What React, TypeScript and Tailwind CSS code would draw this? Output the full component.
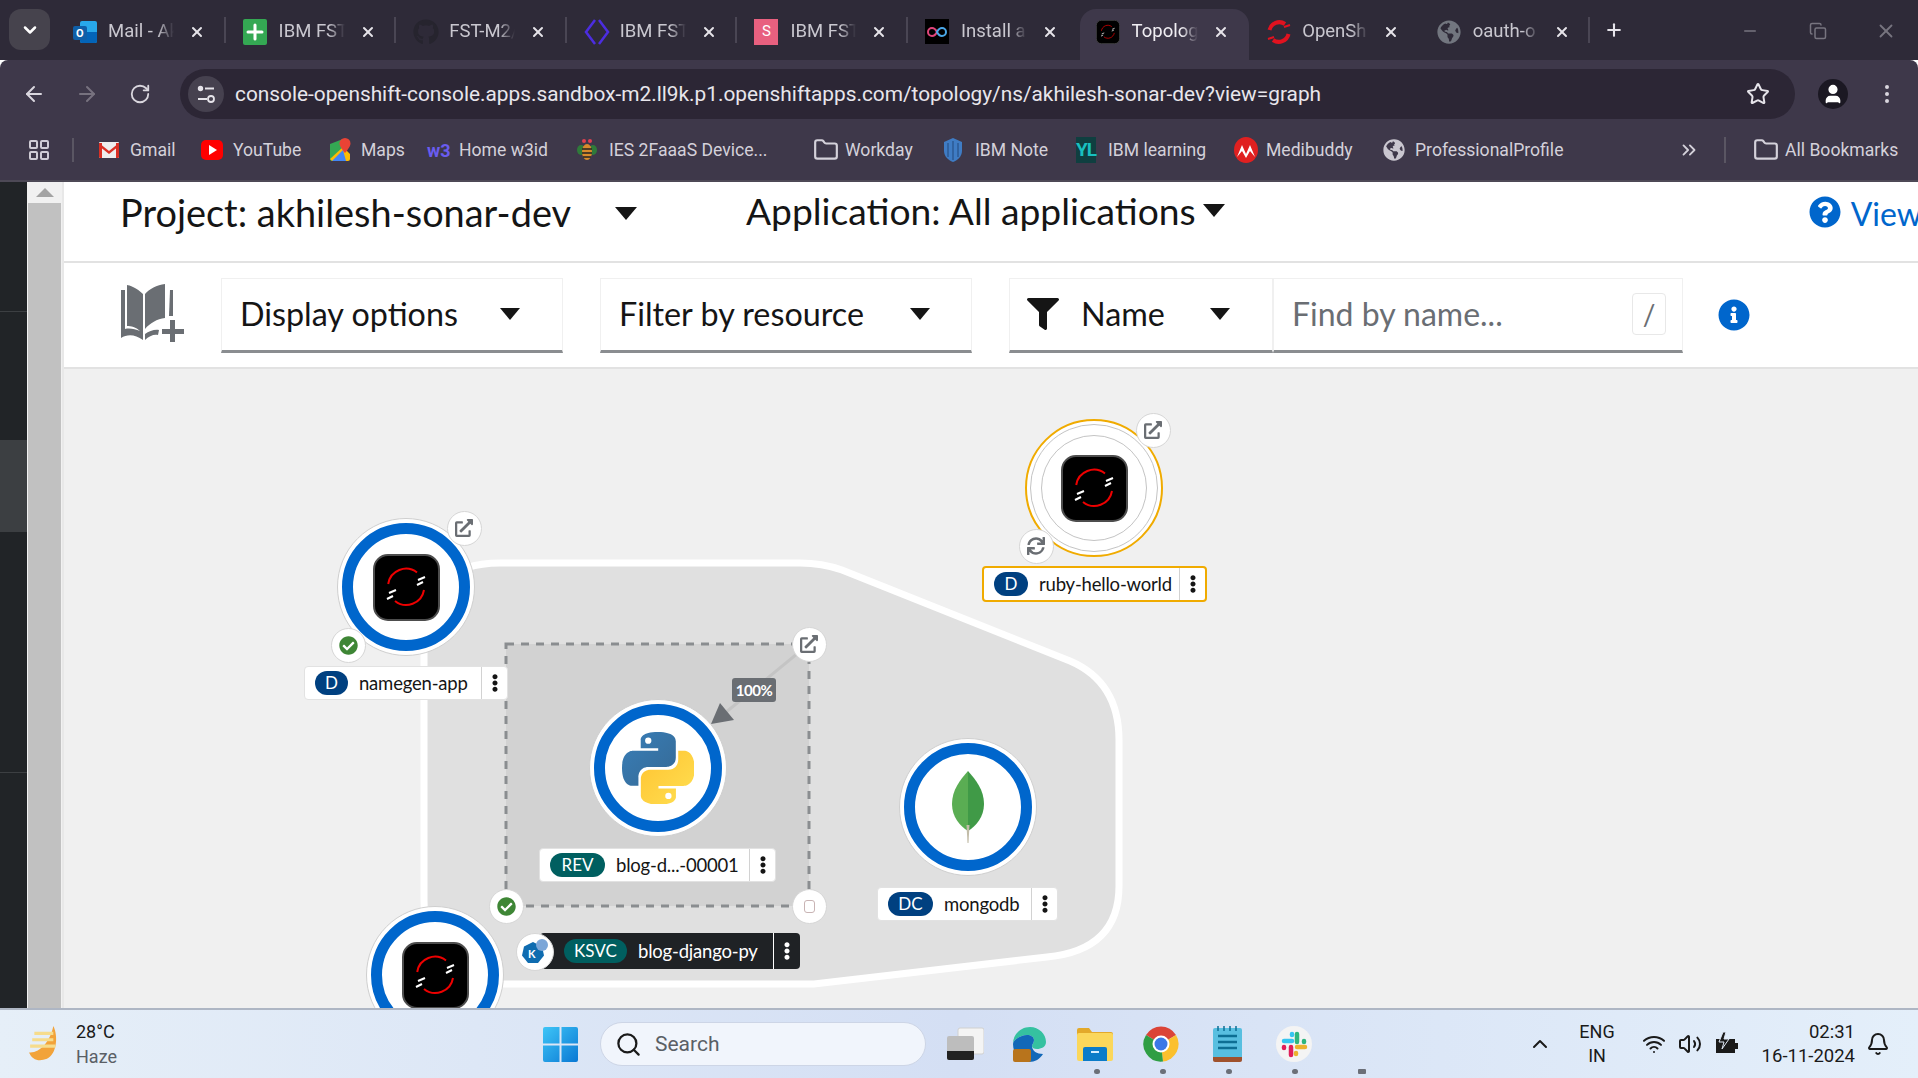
import type { ReactNode } from "react";
import {
  FaCheckCircle,
  FaEllipsisV,
  FaExternalLinkAlt,
  FaFilter,
  FaGithub,
  FaGlobeAmericas,
  FaInfoCircle,
  FaQuestionCircle,
  FaSync,
} from "react-icons/fa";
import {
  ArrowLeft,
  ArrowRight,
  Bell,
  ChevronDown,
  ChevronUp,
  ChevronsRight,
  Copy,
  EllipsisVertical,
  Folder,
  LayoutGrid,
  Minus,
  Plus,
  RotateCw,
  Search,
  Star,
  User,
  Volume2,
  Wifi,
  X,
} from "lucide-react";

// page coordinates of the canvas corner, nodes below are given in page coordinates
const OX = 64;
const OY = 369;

function ShiftIcon({ size = 67 }: { size?: number }) {
  return (
    <svg width={size} height={size} viewBox="0 0 67 67">
      <rect x="1" y="1" width="65" height="65" rx="14" fill="#000" stroke="#4d4d4d" strokeWidth="2" />
      <path d="M15.2 30A18 18 0 0 1 44 18.5" fill="none" stroke="#e00" strokeWidth="2" />
      <path d="M51 36A18 18 0 0 1 22 47" fill="none" stroke="#e00" strokeWidth="2" />
      <path d="M45 26l7-3M44 31l6-3M16 39l7-3M14 45l6-3" stroke="#fff" strokeWidth="2" />
    </svg>
  );
}

function PythonIcon() {
  return (
    <svg width="72" height="72" viewBox="0 0 110 110">
      <defs>
        <linearGradient id="pyBlue" x1="0" y1="0" x2="1" y2="1">
          <stop offset="0" stopColor="#387eb8" />
          <stop offset="1" stopColor="#366994" />
        </linearGradient>
        <linearGradient id="pyYellow" x1="0" y1="0" x2="1" y2="1">
          <stop offset="0" stopColor="#ffe052" />
          <stop offset="1" stopColor="#ffc331" />
        </linearGradient>
      </defs>
      <path
        fill="url(#pyBlue)"
        d="M54.9 0C26.9 0 28.6 12.2 28.6 12.2l0 12.6h26.7v3.8H18S0 26.5 0 54.9c0 28.4 15.7 27.4 15.7 27.4h9.4V69.1s-.5-15.7 15.5-15.7h26.6s15 .2 15-14.5V14.6S84.5 0 54.9 0zM40.1 8.5a4.8 4.8 0 1 1 0 9.6 4.8 4.8 0 0 1 0-9.6z"
      />
      <path
        fill="url(#pyYellow)"
        transform="rotate(180 55.5 55.5)"
        d="M54.9 0C26.9 0 28.6 12.2 28.6 12.2l0 12.6h26.7v3.8H18S0 26.5 0 54.9c0 28.4 15.7 27.4 15.7 27.4h9.4V69.1s-.5-15.7 15.5-15.7h26.6s15 .2 15-14.5V14.6S84.5 0 54.9 0zM40.1 8.5a4.8 4.8 0 1 1 0 9.6 4.8 4.8 0 0 1 0-9.6z"
      />
    </svg>
  );
}

function MongoIcon() {
  return (
    <svg width="34" height="72" viewBox="0 0 34 72">
      <path d="M17 0C9 9 1 19 1 33c0 13 8 22 16 27z" fill="#5aad53" />
      <path d="M17 0c8 9 16 19 16 33 0 13-8 22-16 27z" fill="#409a47" />
      <path d="M15.5 54h3l-1 18h-1z" fill="#c2bca8" />
    </svg>
  );
}

function Node({
  x,
  y,
  warn,
  children,
}: {
  x: number;
  y: number;
  warn?: boolean;
  children: ReactNode;
}) {
  const size = 138;
  return (
    <div
      className={
        warn
          ? "absolute flex items-center justify-center rounded-full border-2 border-[#f0ab00] bg-white"
          : "absolute flex items-center justify-center rounded-full border border-[#cfcfcf] bg-white"
      }
      style={{ left: x - OX - size / 2, top: y - OY - size / 2, width: size, height: size }}
    >
      <div
        className={
          warn
            ? "flex h-[128px] w-[128px] items-center justify-center rounded-full border border-[#c4c4c4]"
            : "flex h-[128px] w-[128px] items-center justify-center rounded-full border-[11px] border-[#0066cc]"
        }
      >
        {warn ? (
          <div className="flex h-[106px] w-[106px] items-center justify-center rounded-full border border-[#c4c4c4]">
            {children}
          </div>
        ) : (
          children
        )}
      </div>
    </div>
  );
}

function Deco({ x, y, size = 35, children }: { x: number; y: number; size?: number; children: ReactNode }) {
  return (
    <div
      className="absolute flex items-center justify-center rounded-full border border-[#d6d6d6] bg-white text-[#6a6e73]"
      style={{ left: x - OX - size / 2, top: y - OY - size / 2, width: size, height: size }}
    >
      {children}
    </div>
  );
}

function NodeLabel({
  x,
  y,
  w,
  h = 34,
  badge,
  badgeW,
  name,
  variant,
}: {
  x: number;
  y: number;
  w: number;
  h?: number;
  badge: string;
  badgeW: number;
  name: string;
  variant?: "dark" | "warn";
}) {
  const dark = variant === "dark";
  const teal = badge === "REV" || badge === "KSVC";
  return (
    <div
      className={
        dark
          ? "absolute flex items-center rounded bg-[#1f2225] pl-[24px] text-white"
          : variant === "warn"
            ? "absolute flex items-center rounded border-2 border-[#f0ab00] bg-white pl-[10px] text-[#151515]"
            : "absolute flex items-center rounded border border-[#e2e2e2] bg-white pl-[10px] text-[#151515]"
      }
      style={{ left: x - OX, top: y - OY, width: w, height: h }}
    >
      <span
        className={
          teal
            ? "flex h-[24px] shrink-0 items-center justify-center rounded-full bg-[#005f60] text-[17px] text-white"
            : "flex h-[24px] shrink-0 items-center justify-center rounded-full bg-[#004080] text-[17px] text-white"
        }
        style={{ width: badgeW }}
      >
        {badge}
      </span>
      <span className="ml-[11px] flex-1 translate-y-[1px] whitespace-nowrap text-[18.5px] tracking-[-0.2px]">{name}</span>
      <span className={dark ? "flex h-full w-[27px] shrink-0 items-center justify-center border-l border-white" : "flex h-full w-[26px] shrink-0 items-center justify-center border-l border-[#d2d2d2]"}>
        <FaEllipsisV className={dark ? "text-[18px] text-white" : "text-[18px] text-[#151515]"} />
      </span>
    </div>
  );
}

function Canvas() {
  return (
    <div className="relative min-h-0 flex-1 overflow-hidden bg-[#f0f0f0] font-['Lato',sans-serif]">
      <svg className="absolute inset-0" width="1854" height="639" viewBox="64 369 1854 639">
        <path
          d="M424 640Q424 563 500 563L800 563Q822 563 842 570L1070 661Q1119 682 1119 740L1119 886Q1119 950 1047 957L814 984L500 984Q424 984 424 900Z"
          fill="#e0e0e0"
          stroke="#fff"
          strokeWidth="7"
        />
        <rect x="506" y="644" width="303" height="262" fill="#d2d2d2" stroke="#8a8d90" strokeWidth="3" strokeDasharray="8 7" />
        <path d="M809 644L725 713" stroke="#c4c4c4" strokeWidth="3" />
        <path d="M711 724L720 703L734 720Z" fill="#6a6e73" />
      </svg>

      <Node x={406} y={587}>
        <ShiftIcon />
      </Node>
      <Deco x={464} y={528}>
        <FaExternalLinkAlt className="text-[18px]" />
      </Deco>
      <Deco x={348} y={645}>
        <FaCheckCircle className="text-[19px] text-[#3e8635]" />
      </Deco>
      <NodeLabel x={304} y={666} w={204} badge="D" badgeW={33} name="namegen-app" />

      <Node x={658} y={768}>
        <PythonIcon />
      </Node>
      <Deco x={809} y={644}>
        <FaExternalLinkAlt className="text-[18px]" />
      </Deco>
      <Deco x={506} y={906}>
        <FaCheckCircle className="text-[19px] text-[#3e8635]" />
      </Deco>
      <Deco x={809} y={906}>
        <span className="h-[13px] w-[11px] rounded-[3px] border border-[#c9b4b4]" />
      </Deco>
      <div className="absolute left-[668px] top-[309px] flex h-[24px] w-[44px] items-center justify-center rounded-[3px] bg-[#6a6e73] text-[15px] font-bold tracking-[-0.5px] text-white">
        100%
      </div>
      <NodeLabel x={539} y={848} w={237} badge="REV" badgeW={55} name="blog-d...-00001" />

      <NodeLabel x={540} y={933} w={260} h={36} badge="KSVC" badgeW={63} name="blog-django-py" variant="dark" />
      <Deco x={535} y={952} size={38}>
        <svg width="30" height="30" viewBox="0 0 30 30">
          <path d="M13 5l9 4.5 2 9-6 7.5h-10l-6-7.5 2-9z" fill="#0f6cb0" />
          <circle cx="22" cy="8" r="6" fill="#7ba6d8" />
          <text x="8" y="21" fontSize="11" fontWeight="700" fill="#fff" fontFamily="Lato, sans-serif">
            K
          </text>
        </svg>
      </Deco>

      <Node x={435} y={975}>
        <ShiftIcon />
      </Node>

      <Node x={968} y={807}>
        <MongoIcon />
      </Node>
      <NodeLabel x={877} y={887} w={181} badge="DC" badgeW={45} name="mongodb" />

      <Node x={1094} y={488} warn>
        <ShiftIcon />
      </Node>
      <Deco x={1153} y={430}>
        <FaExternalLinkAlt className="text-[18px]" />
      </Deco>
      <Deco x={1036} y={546}>
        <FaSync className="text-[18px]" />
      </Deco>
      <NodeLabel x={982} y={566} w={225} h={36} badge="D" badgeW={34} name="ruby-hello-world" variant="warn" />
    </div>
  );
}

function BookPlus() {
  return (
    <svg className="-translate-y-[3px]" width="66" height="60" viewBox="0 0 66 60">
      <path
        d="M3 8v48c6-4 14-4 22 2V12C19 6 11 3 9 3v41c4 0 9 1 13 5-5-2-10-3-15-2V8z"
        fill="#6a6e73"
      />
      <path d="M27 12c4-5 12-9 20-10v34c-8 1-15 5-20 11z" fill="#6a6e73" />
      <path d="M52 8h3v26h-4z" fill="#6a6e73" />
      <path d="M27 52c4-3 10-5 14-4l-1 5c-4-1-9 1-13 5z" fill="#6a6e73" />
      <path d="M52 38h5v9h9v5h-9v8h-5v-8h-8v-5h8z" fill="#6a6e73" />
    </svg>
  );
}

function Caret({ className }: { className: string }) {
  return <span className={`h-0 w-0 shrink-0 border-x-[10.5px] border-t-[12px] border-x-transparent border-t-[#151515] ${className}`} />;
}

function Dropdown({ className, label, caret }: { className: string; label: string; caret: string }) {
  return (
    <div className={`flex h-[75px] items-center border border-b-[3px] border-[#f0f0f0] border-b-[#8a8d90] ${className}`}>
      <span className="text-[32.3px] text-[#151515]">{label}</span>
      <Caret className={caret} />
    </div>
  );
}

function Toolbar() {
  return (
    <div className="flex h-[106px] shrink-0 items-center border-b-2 border-[#e2e2e2] bg-white pl-[54px] font-['Lato',sans-serif]">
      <BookPlus />
      <Dropdown className="ml-[37px] w-[342px] pl-[18px]" label="Display options" caret="ml-[42px]" />
      <Dropdown className="ml-[37px] w-[372px] pl-[18px]" label="Filter by resource" caret="ml-[46px]" />
      <div className="ml-[37px] flex h-[75px] w-[264px] items-center border border-b-[3px] border-[#f0f0f0] border-b-[#8a8d90] pl-[17px]">
        <FaFilter className="text-[32px] text-[#151515]" />
        <span className="ml-[22px] text-[32.3px] text-[#151515]">Name</span>
        <Caret className="ml-[45px]" />
      </div>
      <div className="flex h-[75px] w-[410px] items-center border border-b-[3px] border-[#f0f0f0] border-b-[#8a8d90] pl-[18px]">
        <span className="text-[32px] text-[#6a6e73]">Find by name...</span>
        <span className="ml-auto mr-[16px] flex h-[42px] w-[34px] items-center justify-center rounded border border-[#e8e8e8] text-[28px] text-[#6a6e73]">
          /
        </span>
      </div>
      <FaInfoCircle className="ml-[35px] text-[32px] text-[#0066cc]" />
    </div>
  );
}

function ProjectBar() {
  return (
    <div className="flex h-[81px] shrink-0 items-center overflow-hidden border-b-2 border-[#e2e2e2] bg-white pb-[16px] pl-[56px] font-['Lato',sans-serif] text-[#151515]">
      <span className="w-[494px] shrink-0 whitespace-nowrap text-[37.9px]">Project: akhilesh-sonar-dev</span>
      <Caret className="ml-[1px] border-x-[11.5px] border-t-[13px]" />
      <span className="ml-[109px] shrink-0 -translate-y-[3px] whitespace-nowrap text-[37.2px]">Application: All applications</span>
      <Caret className="ml-[7px] -translate-y-[3px] border-x-[11.5px] border-t-[13px]" />
      <FaQuestionCircle className="ml-[584px] shrink-0 -translate-y-[2px] text-[32px] text-[#0066cc]" />
      <span className="ml-[10px] shrink-0 text-[32px] text-[#0066cc]">View</span>
    </div>
  );
}

function OutlookIcon() {
  return (
    <svg width="26" height="26" viewBox="0 0 26 26">
      <rect x="8" y="2" width="17" height="22" rx="2" fill="#28a8ea" />
      <path d="M8 13h17v9a2 2 0 0 1-2 2H10a2 2 0 0 1-2-2z" fill="#0364b8" />
      <rect x="1" y="7" width="14" height="14" rx="2" fill="#0f5fa8" />
      <text x="4" y="18" fontSize="11" fontWeight="700" fill="#fff" fontFamily="Roboto, sans-serif">
        O
      </text>
    </svg>
  );
}

function SheetIcon() {
  return (
    <div className="flex h-[26px] w-[24px] items-center justify-center rounded-[2px] bg-[#34a853]">
      <Plus size={24} strokeWidth={3} className="text-white" />
    </div>
  );
}

function DiamondCode() {
  return (
    <svg width="26" height="28" viewBox="0 0 26 28" fill="none" stroke="#4c2de0" strokeWidth="2.5">
      <path d="M11 2L2 14l9 12M15 2l9 12-9 12" />
    </svg>
  );
}

function InfinityIcon() {
  return (
    <div className="flex h-[25px] w-[24px] items-center justify-center bg-black">
      <svg width="20" height="12" viewBox="0 0 20 12" fill="none" strokeWidth="2">
        <path d="M10 6C8 2 6 2 5 2a4 4 0 0 0 0 8c1 0 3 0 5-4z" stroke="#e0457b" />
        <path d="M10 6c2-4 4-4 5-4a4 4 0 0 1 0 8c-1 0-3 0-5-4z" stroke="#4aa8e8" />
      </svg>
    </div>
  );
}

function RedRing() {
  return (
    <svg width="26" height="26" viewBox="0 0 26 26" fill="none" stroke="#e0121f" strokeWidth="4">
      <path d="M3.500 11A10 10 0 0 1 19 5M22.500 15A10 10 0 0 1 7 21" />
      <path d="M18 8l6-2M2 20l6-2" strokeWidth="2" />
    </svg>
  );
}

const TABS: { title: string; icon: ReactNode; active?: boolean }[] = [
  { title: "Mail - Akhilesh", icon: <OutlookIcon /> },
  { title: "IBM FST", icon: <SheetIcon /> },
  { title: "FST-M2/", icon: <FaGithub className="text-[26px] text-[#26242e]" /> },
  { title: "IBM FST", icon: <DiamondCode /> },
  {
    title: "IBM FST",
    icon: <div className="flex h-[26px] w-[24px] items-center justify-center bg-[#e8607f] text-[15px] text-white">S</div>,
  },
  { title: "Install a", icon: <InfinityIcon /> },
  { title: "Topology", icon: <ShiftIcon size={24} />, active: true },
  { title: "OpenShift", icon: <RedRing /> },
  { title: "oauth-o", icon: <FaGlobeAmericas className="text-[24px] text-[#72767f]" /> },
];

function TabStrip() {
  return (
    <div className="flex h-[60px] shrink-0 items-end bg-[#2e2a38] font-['Roboto',sans-serif]">
      <div className="mb-[10px] ml-[9px] mr-[12px] flex h-[41px] w-[41px] items-center justify-center rounded-xl bg-[#46434d]">
        <ChevronDown size={20} className="text-white" strokeWidth={3} />
      </div>
      {TABS.map((t, i) => (
        <div key={i} className="relative flex h-[51px] w-[170.6px] shrink-0 items-center pb-[6px] pl-[10px]">
          {t.active && <div className="absolute -left-[6px] right-[7px] top-0 h-[51px] rounded-t-2xl bg-[#3e384a]" />}
          <div className="relative flex h-[26px] w-[36px] shrink-0 items-center">{t.icon}</div>
          <span
            className={
              t.active
                ? "relative w-[66px] shrink-0 overflow-hidden whitespace-nowrap text-[18.5px] text-[#f0eef3] [mask-image:linear-gradient(to_right,#000_75%,transparent)]"
                : "relative w-[66px] shrink-0 overflow-hidden whitespace-nowrap text-[18.5px] text-[#c9c7cf] [mask-image:linear-gradient(to_right,#000_75%,transparent)]"
            }
          >
            {t.title}
          </span>
          <X size={16} strokeWidth={3} className="relative ml-[15px] shrink-0 text-[#e6e4ea]" />
          {!t.active && i !== 5 && i !== 7 && <div className="absolute right-[7px] top-[8px] h-[26px] w-[2px] bg-[#4a4654]" />}
        </div>
      ))}
      <div className="mb-[9px] ml-[7px] flex h-[42px] items-center">
        <Plus size={20} strokeWidth={2.5} className="text-[#e6e4ea]" />
      </div>
      <Minus size={18} className="mb-[20px] ml-[117px] text-[#77747f]" />
      <Copy size={18} className="mb-[20px] ml-[50px] text-[#77747f]" />
      <X size={22} className="mb-[18px] ml-[48px] text-[#77747f]" />
    </div>
  );
}

function AddressBar() {
  return (
    <div className="flex h-[60px] shrink-0 items-start rounded-t-lg bg-[#3e384a] pl-[22px] pt-[9px] font-['Roboto',sans-serif]">
      <div className="flex h-[50px] items-center">
        <ArrowLeft size={24} className="text-[#d9d6de]" />
        <ArrowRight size={24} className="ml-[29px] text-[#77727f]" />
        <RotateCw size={22} className="ml-[30px] text-[#d9d6de]" />
      </div>
      <div className="ml-[29px] flex h-[50px] w-[1615px] items-center rounded-full bg-[#2c2635] pl-[8px]">
        <div className="flex h-[36px] w-[36px] items-center justify-center rounded-full bg-[#46414f]">
          <svg width="22" height="22" viewBox="0 0 22 22" fill="none" stroke="#e6e4ea" strokeWidth="1.800">
            <circle cx="5.500" cy="5.500" r="1.800" fill="#e6e4ea" />
            <path d="M10 5.500h9M3 16h9" />
            <circle cx="16" cy="16" r="3" />
          </svg>
        </div>
        <span className="ml-[11px] translate-y-[1px] whitespace-nowrap text-[20.83px] text-[#e8e6ec]">
          console-openshift-console.apps.sandbox-m2.ll9k.p1.openshiftapps.com/topology/ns/akhilesh-sonar-dev?view=graph
        </span>
        <Star size={24} className="ml-auto mr-[25px] text-[#e6e4ea]" />
      </div>
      <div className="ml-[23px] flex h-[50px] items-center">
        <div className="flex h-[30px] w-[30px] items-center justify-center rounded-full bg-[#1b1823]">
          <User size={22} fill="#fff" className="text-white" />
        </div>
        <EllipsisVertical size={24} className="ml-[27px] text-[#d9d6de]" />
      </div>
    </div>
  );
}

function Gmail() {
  return (
    <svg width="22" height="20" viewBox="0 0 22 20">
      <rect x="1" y="2" width="20" height="16" rx="1" fill="#eee" />
      <path d="M1 3l10 8 10-8v3l-10 8-10-8z" fill="#d93025" />
      <path d="M1 3h3v15H2a1 1 0 0 1-1-1zM18 3h3v14a1 1 0 0 1-1 1h-2z" fill="#d93025" />
    </svg>
  );
}

function YouTube() {
  return (
    <div className="flex h-[20px] w-[22px] items-center justify-center rounded-[5px] bg-[#f00]">
      <span className="ml-[2px] h-0 w-0 border-y-[5px] border-l-[8px] border-y-transparent border-l-white" />
    </div>
  );
}

function MapsPin() {
  return (
    <svg width="22" height="24" viewBox="0 0 22 24">
      <path d="M1 6l13-5v22H3a2 2 0 0 1-2-2z" fill="#34a853" />
      <path d="M1 21L14 9l7 7v5a2 2 0 0 1-2 2H3z" fill="#fbbc04" />
      <path d="M3 23L14 12l3 11z" fill="#4285f4" />
      <path d="M16 0a5.500 5.500 0 0 1 5.500 5.500C21.500 9 16 15 16 15s-5.500-6-5.500-9.500A5.500 5.500 0 0 1 16 0z" fill="#ea4335" />
    </svg>
  );
}

function Bee() {
  return (
    <svg width="20" height="24" viewBox="0 0 20 24">
      <ellipse cx="4" cy="12" rx="4" ry="5" fill="#2f7a3a" />
      <ellipse cx="16" cy="12" rx="4" ry="5" fill="#2f7a3a" />
      <ellipse cx="10" cy="14" rx="5" ry="8" fill="#d88a2c" />
      <path d="M5 11h10M5 15h10M6 19h8" stroke="#222" strokeWidth="1.5" />
      <circle cx="7" cy="3" r="2" fill="#e04050" />
      <circle cx="13" cy="3" r="2" fill="#e04050" />
    </svg>
  );
}

function Shield() {
  return (
    <svg width="20" height="26" viewBox="0 0 20 26">
      <path d="M10 1l9 4v9c0 5-4 9-9 11-5-2-9-6-9-11V5z" fill="#3f7cc4" />
      <path d="M5 6v14M10 4v19M15 6v14" stroke="#2c5a94" strokeWidth="1.5" />
    </svg>
  );
}

function Medibuddy() {
  return (
    <svg width="24" height="26" viewBox="0 0 24 26">
      <ellipse cx="12" cy="13" rx="12" ry="13" fill="#e02020" />
      <path d="M3 20L8 8l4 9 4-9 5 12-5-6-4 7-4-7z" fill="#fff" />
    </svg>
  );
}

function Bookmark({ className, icon, label }: { className: string; icon: ReactNode; label: string }) {
  return (
    <div className={`flex shrink-0 items-center ${className}`}>
      <span className="flex w-[32px] shrink-0 items-center">{icon}</span>
      <span className="whitespace-nowrap text-[17.6px] text-[#d4d1da]">{label}</span>
    </div>
  );
}

function BookmarksBar() {
  return (
    <div className="flex h-[62px] shrink-0 items-center border-b-2 border-[#4d4956] bg-[#3e384a] pl-[27px] font-['Roboto',sans-serif]">
      <LayoutGrid size={24} className="shrink-0 text-[#cfccd5]" />
      <div className="ml-[21px] mr-[24px] h-[24px] w-[2px] bg-[#5a5663]" />
      <Bookmark className="w-[103px]" icon={<Gmail />} label="Gmail" />
      <Bookmark className="w-[128px]" icon={<YouTube />} label="YouTube" />
      <Bookmark className="w-[98px]" icon={<MapsPin />} label="Maps" />
      <Bookmark
        className="w-[150px]"
        icon={<span className="text-[18px] font-bold text-[#6a5cf0]">w3</span>}
        label="Home w3id"
      />
      <Bookmark className="w-[236px]" icon={<Bee />} label="IES 2FaaaS Device..." />
      <Bookmark className="w-[130px]" icon={<Folder size={26} className="text-[#d4d1da]" />} label="Workday" />
      <Bookmark className="w-[133px]" icon={<Shield />} label="IBM Note" />
      <Bookmark
        className="w-[158px]"
        icon={<span className="bg-[#0f3f40] text-[19px] font-bold leading-[26px] tracking-tighter text-[#19c0c0]">YL</span>}
        label="IBM learning"
      />
      <Bookmark className="w-[149px]" icon={<Medibuddy />} label="Medibuddy" />
      <Bookmark className="w-[295px]" icon={<FaGlobeAmericas className="text-[22px] text-[#c9c6cf]" />} label="ProfessionalProfile" />
      <ChevronsRight size={22} className="shrink-0 text-[#d4d1da]" />
      <div className="ml-[24px] mr-[27px] h-[26px] w-[2px] bg-[#5a5663]" />
      <Bookmark className="w-[150px]" icon={<Folder size={26} className="text-[#d4d1da]" />} label="All Bookmarks" />
    </div>
  );
}

function SideRail() {
  return (
    <div className="flex w-[27px] shrink-0 flex-col bg-[#212427]">
      <div className="h-[130px] border-b border-[#3c3f42]" />
      <div className="mt-[128px] h-[92px] bg-[#3c3f42]" />
      <div className="h-[241px] border-b border-[#3c3f42]" />
    </div>
  );
}

function ScrollTrack() {
  return (
    <div className="flex w-[37px] shrink-0 flex-col border-r-2 border-[#e8e8e8] bg-[#f1f1f1] pl-[1px] pr-[1px]">
      <div className="flex h-[21px] items-center justify-center">
        <span className="h-0 w-0 border-x-[9px] border-b-[9px] border-x-transparent border-b-[#a3a3a3]" />
      </div>
      <div className="flex-1 bg-[#c1c1c1]" />
    </div>
  );
}

function Taskbar() {
  return (
    <div className="relative flex h-[70px] shrink-0 items-center border-t-2 border-[#aeb6c4] bg-gradient-to-r from-[#e6eff8] via-[#d4dff4] to-[#e4effa] font-['Roboto',sans-serif] text-[#1a1a1a]">
      <svg className="ml-[28px] shrink-0" width="38" height="40" viewBox="0 0 36 36">
        <path d="M24 1c5 10 3 27-6 31-8 3-14 1-17-6 10 1 20-10 23-25z" fill="#f2a33a" />
        <path d="M6 8h18M4 14h20M2 20h24" stroke="#f6dc8c" strokeWidth="3" />
      </svg>
      <div className="ml-[10px] flex w-[467px] flex-col text-[18px] leading-[25px]">
        <span>28°C</span>
        <span className="text-[#5a5f66]">Haze</span>
      </div>
      <svg className="shrink-0" width="35" height="35" viewBox="0 0 35 35">
        <defs>
          <linearGradient id="winBlue" x1="0" y1="0" x2="1" y2="1">
            <stop offset="0" stopColor="#3ec5f7" />
            <stop offset="1" stopColor="#0a78d4" />
          </linearGradient>
        </defs>
        <path d="M0 2a2 2 0 0 1 2-2h14.500v16.500H0zM18.500 0H33a2 2 0 0 1 2 2v14.500H18.500zM0 18.500h16.500V35H2a2 2 0 0 1-2-2zM18.500 18.500H35V33a2 2 0 0 1-2 2H18.500z" fill="url(#winBlue)" />
      </svg>
      <div className="ml-[22px] flex h-[44px] w-[326px] shrink-0 items-center rounded-full border border-[#cdd5e6] bg-[#f1f5fc] pl-[14px]">
        <Search size={27} strokeWidth={2} className="text-[#1a1a1a]" />
        <span className="ml-[13px] translate-y-[1px] text-[21px] text-[#5a5f66]">Search</span>
      </div>
      <svg className="ml-[20px] shrink-0" width="38" height="34" viewBox="0 0 38 34">
        <rect x="12" y="1" width="26" height="26" rx="2" fill="#f4f4f4" stroke="#d0d0d0" />
        <rect x="1" y="9" width="27" height="24" rx="2" fill="#bdbdbd" />
        <path d="M1 24h27v7a2 2 0 0 1-2 2H3a2 2 0 0 1-2-2z" fill="#222" />
      </svg>
      <svg className="ml-[27px] shrink-0" width="36" height="36" viewBox="0 0 36 36">
        <path d="M2 18C2 8 10 1 19 1c9 0 16 7 16 15 0 5-5 7-9 7-3 0-5-1-5-3 0-2 2-3 2-6 0-3-3-5-7-5-6 0-14 5-14 9z" fill="#35c1a0" />
        <path d="M2 18c0-4 8-9 14-9 4 0 7 2 7 5 0 3-2 4-2 6 0 5 5 8 11 8-3 5-8 8-14 8C9 36 2 28 2 18z" fill="#1268b8" />
        <rect x="2" y="23" width="18" height="13" rx="2" fill="#b8741c" />
      </svg>
      <svg className="ml-[30px] shrink-0" width="36" height="34" viewBox="0 0 36 34">
        <path d="M0 3a2 2 0 0 1 2-2h10l3 4h19a2 2 0 0 1 2 2v4H0z" fill="#e3a92a" />
        <rect y="6" width="36" height="28" rx="2" fill="#fbd75b" />
        <path d="M8 20h20a2 2 0 0 1 2 2v12H6V22a2 2 0 0 1 2-2z" fill="#0b7bc8" />
        <rect x="14" y="24" width="8" height="2" fill="#d4ecff" />
      </svg>
      <svg className="ml-[30px] shrink-0" width="36" height="36" viewBox="0 0 36 36">
        <path d="M18 18L3 9A17.500 17.500 0 0 1 33 9z" fill="#db4437" />
        <path d="M18 18L33 9A17.500 17.500 0 0 1 20 35.500z" fill="#fbc02d" />
        <path d="M18 18L20 35.500A17.500 17.500 0 0 1 3 9z" fill="#2f9e44" />
        <circle cx="18" cy="18" r="8.500" fill="#fff" />
        <circle cx="18" cy="18" r="6.500" fill="#3b78e7" />
      </svg>
      <svg className="ml-[34px] shrink-0" width="30" height="36" viewBox="0 0 30 36">
        <rect y="2" width="29" height="33" rx="2" fill="#58bfe0" />
        <path d="M0 31h29v3a2 2 0 0 1-2 2H2a2 2 0 0 1-2-2z" fill="#a0522d" />
        <path d="M5 10h19M5 16h19M5 22h19" stroke="#0d6f94" strokeWidth="2.4" />
        <path d="M5 0v5M11 0v5M17 0v5M23 0v5" stroke="#0d6f94" strokeWidth="1.500" />
      </svg>
      <svg className="ml-[33px] shrink-0" width="36" height="36" viewBox="0 0 36 36">
        <circle cx="18" cy="18" r="18" fill="#f4f4f4" />
        <g strokeWidth="4.500" strokeLinecap="round">
          <path d="M16 8v1M8 15h8" stroke="#36c5f0" />
          <path d="M21 8v8M28 15v1" stroke="#2eb67d" />
          <path d="M21 21h8M20 28v-1" stroke="#ecb22e" />
          <path d="M8 21v1M15 21v8" stroke="#e01e5a" />
        </g>
      </svg>
      <ChevronUp size={24} className="ml-[216px] shrink-0 text-[#1a1a1a]" />
      <div className="ml-[27px] flex w-[36px] shrink-0 flex-col items-center text-[18px] leading-[24px]">
        <span>ENG</span>
        <span>IN</span>
      </div>
      <Wifi size={24} className="ml-[27px] shrink-0" />
      <Volume2 size={24} className="ml-[12px] shrink-0" />
      <svg className="ml-[11px] shrink-0" width="26" height="26" viewBox="0 0 26 26">
        <path d="M3 8h19v14H3zM22 12h3v6h-3z" fill="#1a1a1a" />
        <path d="M10 1L6 11h5l-2 7 7-10h-5l2-7z" fill="#1a1a1a" stroke="#dfe8f6" strokeWidth="1" />
      </svg>
      <div className="ml-[18px] flex w-[98px] shrink-0 flex-col items-end text-[18.5px] leading-[24px]">
        <span>02:31</span>
        <span>16-11-2024</span>
      </div>
      <Bell size={24} className="ml-[11px] shrink-0" />
      {/* running-app markers under the icons */}
      <span className="absolute left-[1094px] top-[59px] h-[5px] w-[6px] rounded-full bg-[#6b6f78]" />
      <span className="absolute left-[1160px] top-[59px] h-[5px] w-[6px] rounded-full bg-[#6b6f78]" />
      <span className="absolute left-[1226px] top-[59px] h-[5px] w-[6px] rounded-full bg-[#6b6f78]" />
      <span className="absolute left-[1292px] top-[59px] h-[5px] w-[6px] rounded-full bg-[#6b6f78]" />
      <span className="absolute left-[1358px] top-[59px] h-[5px] w-[8px] rounded-[1px] bg-[#6b6f78]" />
    </div>
  );
}

export default function App() {
  return (
    <div className="flex h-[1078px] w-[1918px] flex-col overflow-hidden">
      <TabStrip />
      <AddressBar />
      <BookmarksBar />
      <div className="flex min-h-0 flex-1">
        <SideRail />
        <ScrollTrack />
        <div className="flex min-w-0 flex-1 flex-col">
          <ProjectBar />
          <Toolbar />
          <Canvas />
        </div>
      </div>
      <Taskbar />
    </div>
  );
}
